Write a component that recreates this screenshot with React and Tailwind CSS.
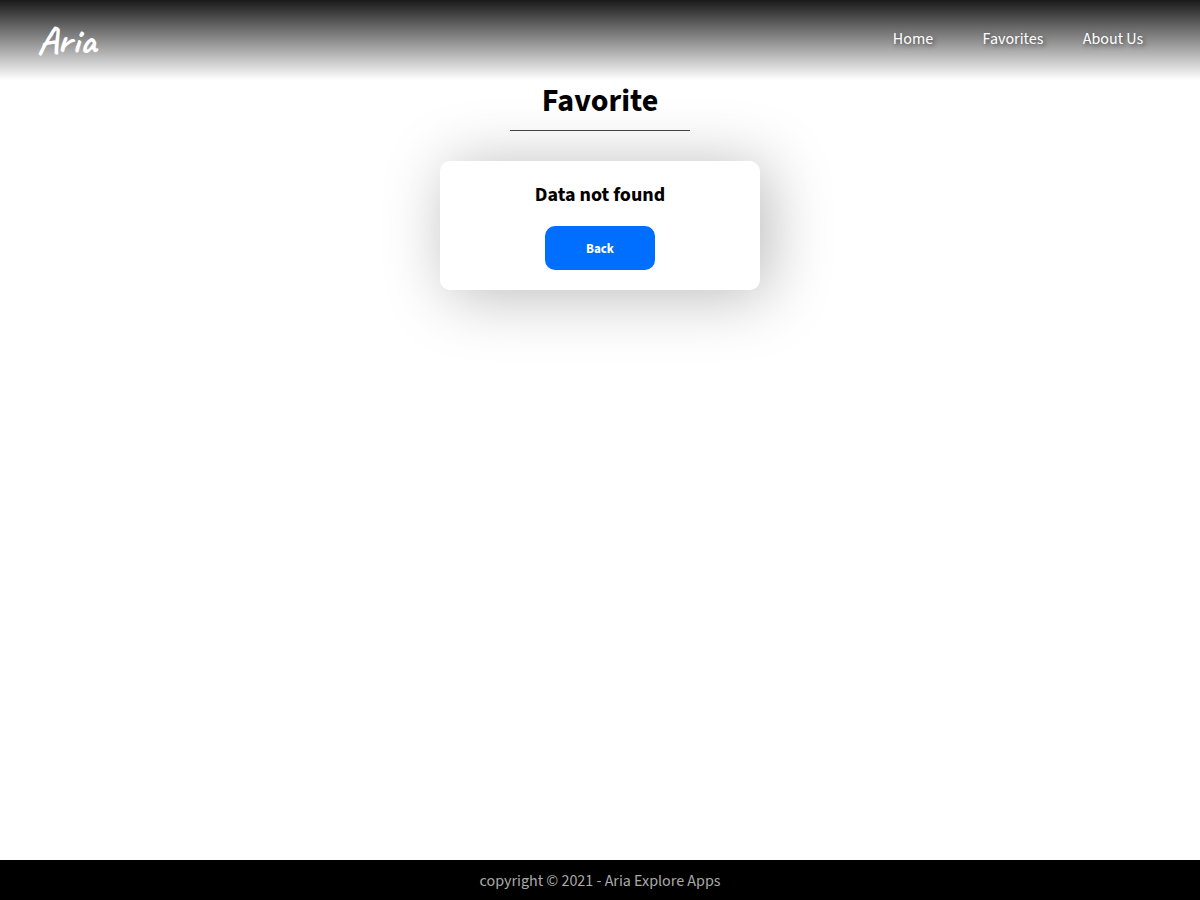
const links = ['Home', 'Favorites', 'About Us'];

export default function App() {
  return (
    <div className="flex min-h-screen flex-col bg-white font-['Source_Sans_Pro','Source_Sans_3','Noto_Sans_CJK_JP','Noto_Sans',sans-serif] text-base text-black">
      <header className="flex h-20 items-center justify-between bg-linear-to-b from-black/90 to-transparent px-[37px]">
        <a href="#home" className="font-['Caveat',cursive] text-[40px] leading-10 font-bold text-white">
          Aria
        </a>
        <nav aria-label="Main">
          <ul className="flex pb-0.5">
            {links.map((label) => (
              <li key={label} className="w-25 text-center">
                <a href="#nav" className="text-base leading-6 text-white [text-shadow:2px_2px_4px_rgba(0,0,0,0.5)]">
                  {label}
                </a>
              </li>
            ))}
          </ul>
        </nav>
      </header>

      <main className="flex flex-1 flex-col items-center">
        <h1 className="w-45 border-b border-[#444] pb-2 text-center text-[32px] leading-[42px] font-bold">Favorite</h1>
        <section className="mt-[30px] flex w-80 flex-col items-center rounded-[10px] bg-white p-5 shadow-[8px_5px_64px_rgba(0,0,0,0.28)]">
          <h2 className="text-xl leading-[29px] font-bold">Data not found</h2>
          <button type="button" className="mt-4 h-11 w-[110px] rounded-[10px] bg-[#006eff] pt-1 text-[13px] font-bold text-white">
            Back
          </button>
        </section>
      </main>

      <footer className="bg-black pt-[9px] pb-[7px] text-center text-base leading-6 text-[#aaa]">
        copyright © 2021 - Aria Explore Apps
      </footer>
    </div>
  );
}
